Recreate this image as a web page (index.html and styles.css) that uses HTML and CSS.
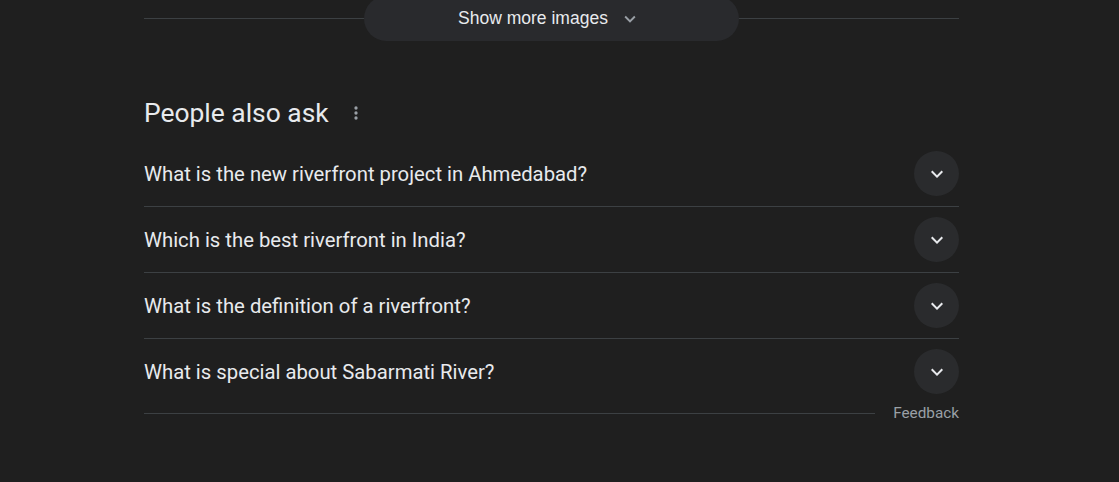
FILE: index.html
```html
<!DOCTYPE html>
<html>
<head>
<meta charset="utf-8">
<link rel="stylesheet" href="styles.css">
</head>
<body>
<div class="col">
  <div class="more">
    <div class="more-btn">
      <span>Show more images</span>
      <svg class="chev-sm" width="22" height="22" viewBox="0 0 24 24"><path d="M7.41 8.59 12 13.17l4.59-4.58L18 10l-6 6-6-6z" fill="#9aa0a6"/></svg>
    </div>
  </div>
  <div class="paa-head">
    <h2>People also ask</h2>
    <svg class="dots" width="20" height="20" viewBox="0 0 24 24"><circle cx="12" cy="6" r="2" fill="#9aa0a6"/><circle cx="12" cy="12" r="2" fill="#9aa0a6"/><circle cx="12" cy="18" r="2" fill="#9aa0a6"/></svg>
  </div>
  <div class="qlist">
    <div class="q"><span>What is the new riverfront project in Ahmedabad?</span><span class="circ"><svg width="24" height="24" viewBox="0 0 24 24"><path d="M7.41 8.59 12 13.17l4.59-4.58L18 10l-6 6-6-6z" fill="#e8eaed"/></svg></span></div>
    <div class="q"><span>Which is the best riverfront in India?</span><span class="circ"><svg width="24" height="24" viewBox="0 0 24 24"><path d="M7.41 8.59 12 13.17l4.59-4.58L18 10l-6 6-6-6z" fill="#e8eaed"/></svg></span></div>
    <div class="q"><span>What is the definition of a riverfront?</span><span class="circ"><svg width="24" height="24" viewBox="0 0 24 24"><path d="M7.41 8.59 12 13.17l4.59-4.58L18 10l-6 6-6-6z" fill="#e8eaed"/></svg></span></div>
    <div class="q"><span>What is special about Sabarmati River?</span><span class="circ"><svg width="24" height="24" viewBox="0 0 24 24"><path d="M7.41 8.59 12 13.17l4.59-4.58L18 10l-6 6-6-6z" fill="#e8eaed"/></svg></span></div>
  </div>
  <div class="foot">
    <div class="foot-line"></div>
    <span class="feedback">Feedback</span>
  </div>
</div>
</body>
</html>
```
FILE: styles.css
```css
html, body {
  margin: 0;
  padding: 0;
  background: #1f1f1f;
  font-family: Roboto, "Liberation Sans", sans-serif;
  color: #e8eaed;
  overflow: hidden;
}
.col {
  width: 815px;
  margin-left: 144px;
}
.more {
  position: relative;
  height: 41px;
  display: flex;
  justify-content: center;
}
.more::before {
  content: "";
  position: absolute;
  left: 0;
  right: 0;
  top: 18px;
  height: 1px;
  background: #3c4043;
}
.more-btn {
  position: relative;
  margin-top: -4px;
  width: 375px;
  height: 45px;
  border-radius: 23px;
  background: #292a2d;
  display: flex;
  align-items: center;
  justify-content: center;
  gap: 11px;
  font-family: "Liberation Sans", Arial, sans-serif;
  font-size: 17.5px;
  color: #e8eaed;
  padding-right: 4px;
  box-sizing: border-box;
}
.paa-head {
  display: flex;
  align-items: center;
  margin-top: 56px;
  height: 32px;
}
.paa-head h2 {
  margin: 0;
  font-weight: 400;
  font-size: 26.4px;
  color: #e8eaed;
}
.dots {
  margin-left: 17px;
}
.qlist {
  margin-top: 12px;
}
.q {
  height: 65px;
  display: flex;
  align-items: center;
  justify-content: space-between;
  border-bottom: 1px solid #3c4043;
  font-size: 20.3px;
}
.q:last-child {
  border-bottom: none;
  height: 65px;
}
.circ {
  width: 45px;
  height: 45px;
  border-radius: 50%;
  background: #2a2b2d;
  display: flex;
  align-items: center;
  justify-content: center;
}
.foot {
  display: flex;
  align-items: center;
  margin-top: 0;
}
.foot-line {
  flex: 1;
  height: 1px;
  background: #3c4043;
  margin-right: 18px;
}
.feedback {
  font-size: 15.3px;
  color: #9aa0a6;
}
```
